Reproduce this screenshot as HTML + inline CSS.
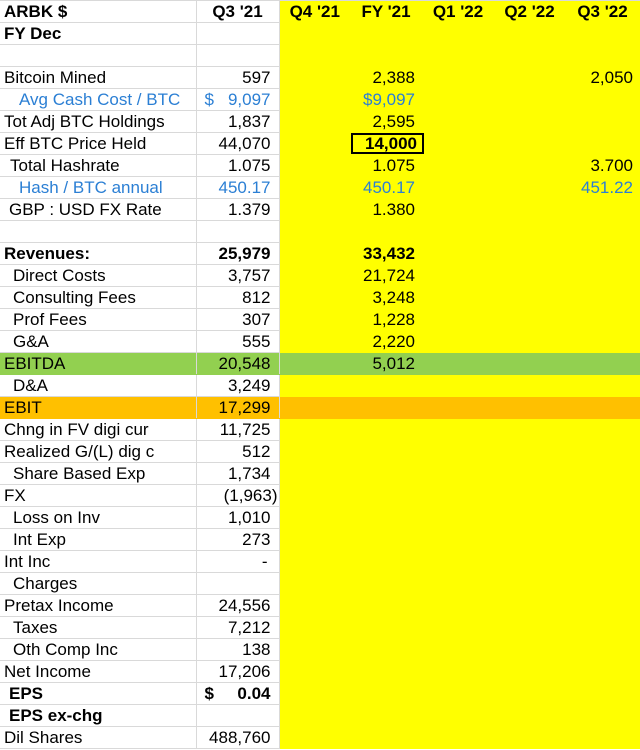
<!DOCTYPE html>
<html><head><meta charset="utf-8"><style>
body{margin:0;width:640px;height:750px;overflow:hidden;background:#fff;font-family:"Liberation Sans",Arial,sans-serif;font-size:17px;color:#000}
table{border-collapse:collapse;table-layout:fixed;width:640px;position:absolute;top:0;left:0;border-top:1px solid #d9d9d9}
td{height:21px;padding:0;border-bottom:1px solid #d9d9d9;white-space:nowrap;overflow:visible;line-height:21px;vertical-align:middle}
td.a{padding-left:4px;border-right:1px solid #d9d9d9}
td.b{text-align:right;padding-right:8px;border-right:1px solid #d9d9d9}
td.y{background:#ffff00;border-bottom:1px solid #ffff00;text-align:right;padding-right:7px}
tr.h td{font-weight:bold;text-align:center;padding:0}
tr.g td{background:#92d050;border-bottom-color:#92d050}
tr.o td{background:#ffc000;border-bottom-color:#ffc000}
.bl{color:#2b7fd4}
.bo{font-weight:bold}
.d{float:left;padding-left:8px}
.box{display:inline-block;border:2px solid #000;width:64px;height:17px;line-height:17px;text-align:right;padding-right:5px;margin-right:-9px;font-weight:bold;box-sizing:content-box}
</style></head><body>
<table>
<colgroup><col style="width:196px"><col style="width:83px"><col style="width:71px"><col style="width:72px"><col style="width:72px"><col style="width:71px"><col style="width:75px"></colgroup>
<tr class="h"><td class="a" style="text-align:left;padding-left:4px">ARBK $</td><td class="b" style="text-align:center">Q3 '21</td><td class="y" style="text-align:center">Q4 '21</td><td class="y" style="text-align:center">FY '21</td><td class="y" style="text-align:center">Q1 '22</td><td class="y" style="text-align:center">Q2 '22</td><td class="y" style="text-align:center">Q3 '22</td></tr>
<tr><td class="a bo">FY Dec</td><td class="b"></td><td class="y"></td><td class="y"></td><td class="y"></td><td class="y"></td><td class="y"></td></tr>
<tr><td class="a"></td><td class="b"></td><td class="y"></td><td class="y"></td><td class="y"></td><td class="y"></td><td class="y"></td></tr>
<tr><td class="a">Bitcoin Mined</td><td class="b">597</td><td class="y"></td><td class="y">2,388</td><td class="y"></td><td class="y"></td><td class="y">2,050</td></tr>
<tr><td class="a bl" style="padding-left:19px">Avg Cash Cost / BTC</td><td class="b bl"><span class="d">$</span>9,097</td><td class="y"></td><td class="y bl">$9,097</td><td class="y"></td><td class="y"></td><td class="y"></td></tr>
<tr><td class="a">Tot Adj BTC Holdings</td><td class="b">1,837</td><td class="y"></td><td class="y">2,595</td><td class="y"></td><td class="y"></td><td class="y"></td></tr>
<tr><td class="a">Eff BTC Price Held</td><td class="b">44,070</td><td class="y"></td><td class="y"><span class="box">14,000</span></td><td class="y"></td><td class="y"></td><td class="y"></td></tr>
<tr><td class="a" style="padding-left:10px">Total Hashrate</td><td class="b">1.075</td><td class="y"></td><td class="y">1.075</td><td class="y"></td><td class="y"></td><td class="y">3.700</td></tr>
<tr><td class="a bl" style="padding-left:19px">Hash / BTC annual</td><td class="b bl">450.17</td><td class="y"></td><td class="y bl">450.17</td><td class="y"></td><td class="y"></td><td class="y bl">451.22</td></tr>
<tr><td class="a" style="padding-left:9px">GBP : USD FX Rate</td><td class="b">1.379</td><td class="y"></td><td class="y">1.380</td><td class="y"></td><td class="y"></td><td class="y"></td></tr>
<tr><td class="a"></td><td class="b"></td><td class="y"></td><td class="y"></td><td class="y"></td><td class="y"></td><td class="y"></td></tr>
<tr><td class="a bo">Revenues:</td><td class="b bo">25,979</td><td class="y"></td><td class="y bo">33,432</td><td class="y"></td><td class="y"></td><td class="y"></td></tr>
<tr><td class="a" style="padding-left:13px">Direct Costs</td><td class="b">3,757</td><td class="y"></td><td class="y">21,724</td><td class="y"></td><td class="y"></td><td class="y"></td></tr>
<tr><td class="a" style="padding-left:13px">Consulting Fees</td><td class="b">812</td><td class="y"></td><td class="y">3,248</td><td class="y"></td><td class="y"></td><td class="y"></td></tr>
<tr><td class="a" style="padding-left:13px">Prof Fees</td><td class="b">307</td><td class="y"></td><td class="y">1,228</td><td class="y"></td><td class="y"></td><td class="y"></td></tr>
<tr><td class="a" style="padding-left:13px">G&amp;A</td><td class="b">555</td><td class="y"></td><td class="y">2,220</td><td class="y"></td><td class="y"></td><td class="y"></td></tr>
<tr class="g"><td class="a">EBITDA</td><td class="b">20,548</td><td class="y"></td><td class="y">5,012</td><td class="y"></td><td class="y"></td><td class="y"></td></tr>
<tr><td class="a" style="padding-left:13px">D&amp;A</td><td class="b">3,249</td><td class="y"></td><td class="y"></td><td class="y"></td><td class="y"></td><td class="y"></td></tr>
<tr class="o"><td class="a">EBIT</td><td class="b">17,299</td><td class="y"></td><td class="y"></td><td class="y"></td><td class="y"></td><td class="y"></td></tr>
<tr><td class="a">Chng in FV digi cur</td><td class="b">11,725</td><td class="y"></td><td class="y"></td><td class="y"></td><td class="y"></td><td class="y"></td></tr>
<tr><td class="a">Realized G/(L) dig c</td><td class="b">512</td><td class="y"></td><td class="y"></td><td class="y"></td><td class="y"></td><td class="y"></td></tr>
<tr><td class="a" style="padding-left:13px">Share Based Exp</td><td class="b">1,734</td><td class="y"></td><td class="y"></td><td class="y"></td><td class="y"></td><td class="y"></td></tr>
<tr><td class="a">FX</td><td class="b" style="padding-right:1px">(1,963)</td><td class="y"></td><td class="y"></td><td class="y"></td><td class="y"></td><td class="y"></td></tr>
<tr><td class="a" style="padding-left:13px">Loss on Inv</td><td class="b">1,010</td><td class="y"></td><td class="y"></td><td class="y"></td><td class="y"></td><td class="y"></td></tr>
<tr><td class="a" style="padding-left:13px">Int Exp</td><td class="b">273</td><td class="y"></td><td class="y"></td><td class="y"></td><td class="y"></td><td class="y"></td></tr>
<tr><td class="a">Int Inc</td><td class="b" style="padding-right:11px">-</td><td class="y"></td><td class="y"></td><td class="y"></td><td class="y"></td><td class="y"></td></tr>
<tr><td class="a" style="padding-left:13px">Charges</td><td class="b"></td><td class="y"></td><td class="y"></td><td class="y"></td><td class="y"></td><td class="y"></td></tr>
<tr><td class="a">Pretax Income</td><td class="b">24,556</td><td class="y"></td><td class="y"></td><td class="y"></td><td class="y"></td><td class="y"></td></tr>
<tr><td class="a" style="padding-left:13px">Taxes</td><td class="b">7,212</td><td class="y"></td><td class="y"></td><td class="y"></td><td class="y"></td><td class="y"></td></tr>
<tr><td class="a" style="padding-left:13px">Oth Comp Inc</td><td class="b">138</td><td class="y"></td><td class="y"></td><td class="y"></td><td class="y"></td><td class="y"></td></tr>
<tr><td class="a">Net Income</td><td class="b">17,206</td><td class="y"></td><td class="y"></td><td class="y"></td><td class="y"></td><td class="y"></td></tr>
<tr><td class="a bo" style="padding-left:9px">EPS</td><td class="b bo"><span class="d">$</span>0.04</td><td class="y"></td><td class="y"></td><td class="y"></td><td class="y"></td><td class="y"></td></tr>
<tr><td class="a bo" style="padding-left:9px">EPS ex-chg</td><td class="b"></td><td class="y"></td><td class="y"></td><td class="y"></td><td class="y"></td><td class="y"></td></tr>
<tr><td class="a">Dil Shares</td><td class="b">488,760</td><td class="y"></td><td class="y"></td><td class="y"></td><td class="y"></td><td class="y"></td></tr>
</table>
</body></html>
